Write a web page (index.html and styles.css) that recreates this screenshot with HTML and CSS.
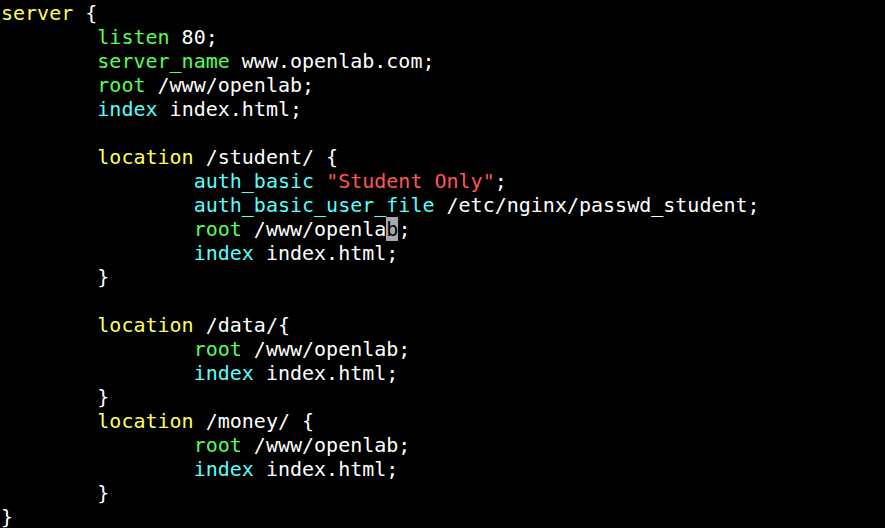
FILE: index.html
```html
<!DOCTYPE html>
<html>
<head>
<meta charset="utf-8">
<link rel="stylesheet" href="styles.css">
</head>
<body>
<pre class="term"><span class="y">server</span> {
        <span class="g">listen</span> 80;
        <span class="g">server_name</span> www.openlab.com;
        <span class="g">root</span> /www/openlab;
        <span class="c">index</span> index.html;

        <span class="y">location</span> /student/ {
                <span class="c">auth_basic</span> <span class="r">"Student Only"</span>;
                <span class="c">auth_basic_user_file</span> /etc/nginx/passwd_student;
                <span class="g">root</span> /www/openla<span class="cur">b</span>;
                <span class="c">index</span> index.html;
        }

        <span class="y">location</span> /data/{
                <span class="g">root</span> /www/openlab;
                <span class="c">index</span> index.html;
        }
        <span class="y">location</span> /money/ {
                <span class="g">root</span> /www/openlab;
                <span class="c">index</span> index.html;
        }
}</pre>
</body>
</html>
```
FILE: styles.css
```css
html, body {
  margin: 0;
  padding: 0;
  background: #000;
  height: 100%;
  overflow: hidden;
}
.term {
  margin: 0;
  padding: 1px 0 0 1px;
  font-family: "DejaVu Sans Mono", monospace;
  font-size: 20px;
  line-height: 24px;
  color: #ffffff;
  white-space: pre;
}
.y { color: #ffff55; }
.g { color: #55ff55; }
.c { color: #55ffff; }
.r { color: #ff5555; }
.cur {
  display: inline-block;
  background: #a8a8b0;
  color: #000;
  height: 24px;
  vertical-align: top;
}
```
